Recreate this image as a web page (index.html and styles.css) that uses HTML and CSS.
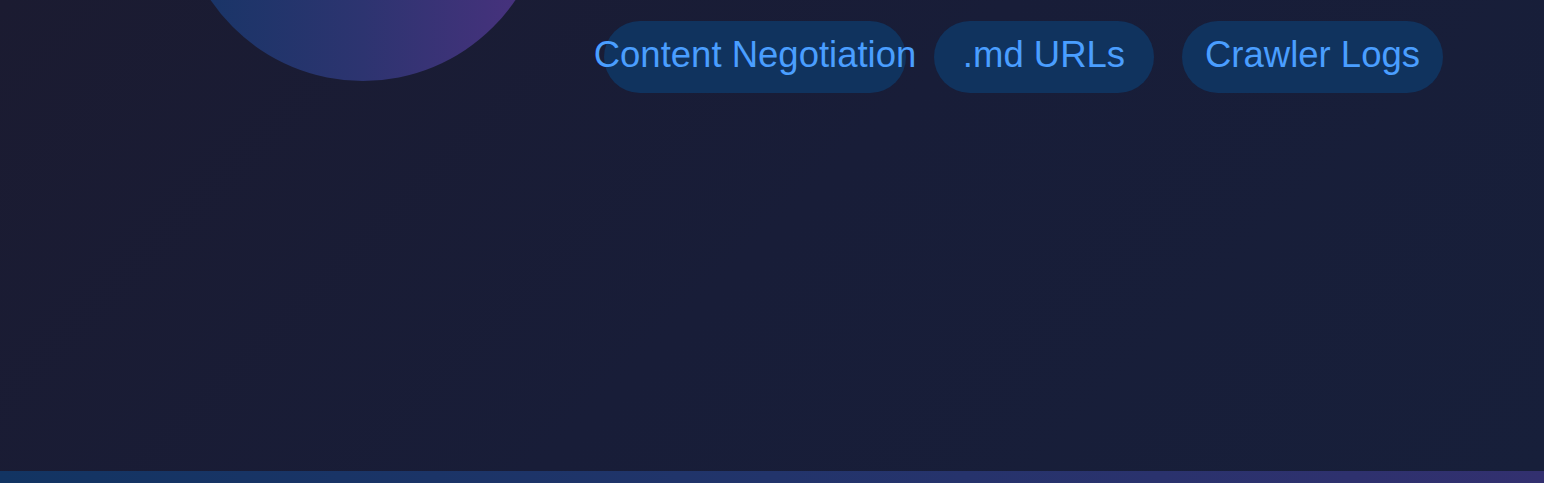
FILE: index.html
```html
<!DOCTYPE html>
<html lang="en">
<head>
<meta charset="utf-8">
<title>Features</title>
<link rel="stylesheet" href="styles.css">
</head>
<body>
<section class="hero">
  <div class="orb"></div>
  <nav class="tags">
    <span class="pill pill-negotiation">Content Negotiation</span>
    <span class="pill pill-md">.md URLs</span>
    <span class="pill pill-logs">Crawler Logs</span>
  </nav>
</section>
<div class="accent-bar"></div>
</body>
</html>
```

FILE: styles.css
```css
html, body {
  margin: 0;
  padding: 0;
  background: #ffffff;
}

body {
  font-family: "Liberation Sans", Arial, Helvetica, sans-serif;
}

.hero {
  position: relative;
  height: 471px;
  overflow: hidden;
  background: linear-gradient(135deg, #1b1b31 0%, #181d38 50%, #171f3a 100%);
}

.orb {
  position: absolute;
  left: 179px;
  top: -287px;
  width: 368px;
  height: 368px;
  border-radius: 50%;
  background: linear-gradient(90deg, #163566 0%, #2d3470 50%, #4b317f 100%);
}

.tags {
  position: relative;
  display: flex;
  justify-content: flex-end;
  gap: 28px;
  padding: 21px 101px 0 0;
}

.pill {
  display: flex;
  align-items: center;
  justify-content: center;
  box-sizing: border-box;
  height: 72px;
  padding-bottom: 5px;
  border-radius: 36px;
  background: #10335e;
  color: #4a9eff;
  font-size: 36.5px;
  white-space: nowrap;
}

.pill-negotiation { width: 302px; }
.pill-md { width: 220px; }
.pill-logs { width: 261px; }

.accent-bar {
  height: 12px;
  background: linear-gradient(90deg, #123462 0%, #22346b 50%, #32306f 100%);
}
```
